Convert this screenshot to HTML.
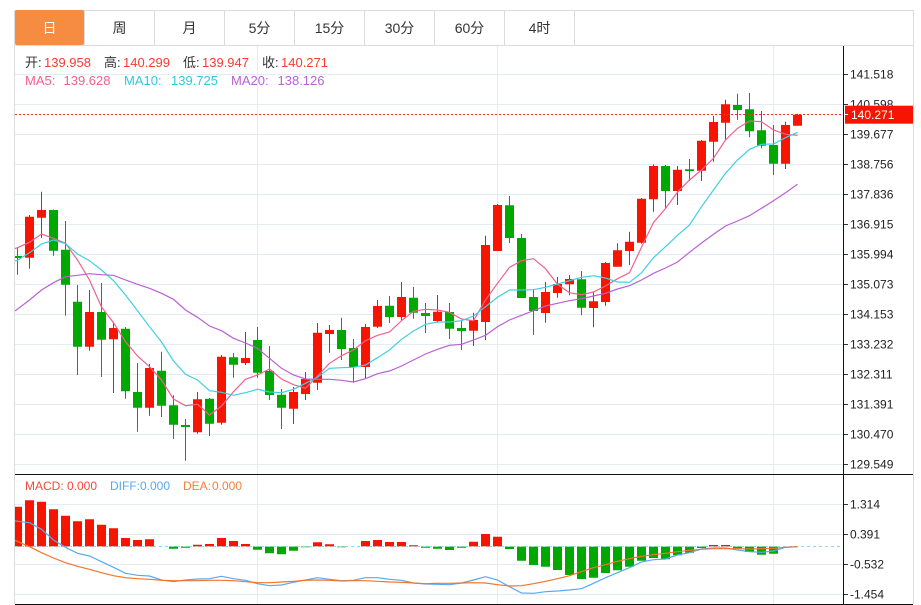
<!DOCTYPE html>
<html>
<head>
<meta charset="utf-8">
<style>
html,body{margin:0;padding:0;background:#fff;width:921px;height:605px;overflow:hidden}
svg{display:block;position:absolute;left:0;top:0}
text{font-family:"Liberation Sans","Noto Sans CJK SC",sans-serif}
</style>
</head>
<body>
<svg width="921" height="605" viewBox="0 0 921 605" xmlns="http://www.w3.org/2000/svg">
<defs><clipPath id="c"><rect x="15" y="45" width="828" height="560"/></clipPath></defs>
<rect width="921" height="605" fill="#fff"/>
<!-- grid -->
<path d="M15 74.5H843M15 104.5H843M15 134.5H843M15 164.5H843M15 194.5H843M15 224.5H843M15 254.5H843M15 284.5H843M15 314.5H843M15 344.5H843M15 374.5H843M15 404.5H843M15 434.5H843M15 464.5H843M15 504.5H843M15 534.5H843M15 564.5H843M15 594.5H843M257.5 46V604M497.5 46V604M773.5 46V604" stroke="#e3ecf3" stroke-width="1" fill="none"/>
<!-- borders -->
<path d="M14.5 10V604M913.5 10V604M14 10.5H914M14 45.5H914M84.5 10V45M154.5 10V45M224.5 10V45M294.5 10V45M364.5 10V45M434.5 10V45M504.5 10V45M574.5 10V45" stroke="#dcdcdc" stroke-width="1" fill="none"/>
<rect x="15" y="10" width="69" height="35" rx="2" fill="#f58c42"/>
<g font-size="14" text-anchor="middle" fill="#333">
<text x="49.5" y="33" fill="#fff">日</text>
<text x="119.5" y="33">周</text>
<text x="189.5" y="33">月</text>
<text x="259.5" y="33">5分</text>
<text x="329.5" y="33">15分</text>
<text x="399.5" y="33">30分</text>
<text x="469.5" y="33">60分</text>
<text x="539.5" y="33">4时</text>
</g>
<g clip-path="url(#c)">
<!-- red wicks -->
<path stroke="#f01408" stroke-width="1" fill="none" d="M29.5 215V268.7M41.5 191.7V238M89.5 290V350.7M113.5 321.7V393M149.5 364V415.7M197.5 392V433.7M221.5 355V424.7M245.5 332V365M293.5 387V424M305.5 372V400M317.5 323V390M329.5 325V352.7M365.5 324V378M377.5 300V328M401.5 282V320M437.5 295V322.7M473.5 312.7V346M485.5 235.7V340M497.5 204V251M545.5 282V322.7M557.5 277V297.7M569.5 275V295.3M593.5 292V327.3M605.5 262V305.7M617.5 243.3V266.7M629.5 231.7V265M641.5 198V243.7M653.5 164.3V211.7M677.5 166V205M701.5 140V181M713.5 116V161.7M725.5 99.7V140M785.5 121.7V169M797.5 113.7V125.7"/>
<!-- green wicks -->
<path stroke="#06a006" stroke-width="1" fill="none" d="M17.5 248V274.7M53.5 209.5V255.7M65.5 221V315.7M77.5 285V375M101.5 283V377M125.5 327V398.7M137.5 363V431.7M161.5 351.7V417M173.5 395.3V439M185.5 419V460.7M209.5 398V436M233.5 353V377.7M257.5 327V377.7M269.5 346V400M281.5 389V429M341.5 317.7V360M353.5 339V382.7M389.5 296V323M413.5 287V318.7M425.5 303V333M449.5 303V339M461.5 320V350M509.5 196V243M521.5 234V298M533.5 290V335M581.5 271V315.3M665.5 165V208M689.5 159V181M737.5 93.7V119.7M749.5 93V137.3M761.5 111V148.3M773.5 125V175"/>
<!-- red bodies -->
<path fill="#f51500" d="M25 216.7h9V257.7h-9zM37 210h9V217.7h-9zM85 312h9V346.7h-9zM109 328h9V339.3h-9zM145 368h9V407.7h-9zM193 399.3h9V432.3h-9zM217 356.7h9V422.7h-9zM241 358h9V363h-9zM289 392h9V408.7h-9zM301 379h9V394h-9zM313 332.7h9V382.7h-9zM325 330h9V334h-9zM361 327h9V367h-9zM373 306h9V326.7h-9zM397 297h9V317h-9zM433 311.7h9V321h-9zM469 320h9V330.7h-9zM481 245h9V322h-9zM493 205h9V251h-9zM541 292h9V313h-9zM553 284h9V293h-9zM565 279h9V284.3h-9zM589 301.3h9V308h-9zM601 263h9V302h-9zM613 250.3h9V266.7h-9zM625 241.7h9V251h-9zM637 198.7h9V242.7h-9zM649 166h9V199.3h-9zM673 169.7h9V191h-9zM697 140.7h9V170.7h-9zM709 122h9V141.7h-9zM721 104.3h9V122.7h-9zM781 125h9V163.7h-9zM793 114.7h9V125.7h-9z"/>
<!-- green bodies -->
<path fill="#00a800" d="M13 256h9v2h-9zM49 210h9V250.7h-9zM61 249.7h9V284.7h-9zM73 301.7h9V346.7h-9zM97 312h9V339.7h-9zM121 328.7h9V391.3h-9zM133 392h9V407.7h-9zM157 370.7h9V405.7h-9zM169 405.3h9V424.7h-9zM181 425h9v2h-9zM205 398.7h9V423.7h-9zM229 357.3h9V364.7h-9zM253 340h9V372.7h-9zM265 371h9V395h-9zM277 394.7h9V407.7h-9zM337 330h9V349h-9zM349 348h9V367h-9zM385 305.7h9V317h-9zM409 297.7h9V312.7h-9zM421 313h9v3h-9zM445 312h9V328.7h-9zM457 328h9v3h-9zM505 205.3h9V238h-9zM517 238h9V298h-9zM529 297h9V311h-9zM577 279.3h9V307.7h-9zM661 166h9V191h-9zM685 169.3h9V171h-9zM733 105h9V110h-9zM745 109.3h9V131.3h-9zM757 130.3h9V145.7h-9zM769 145h9V163.7h-9z"/>
<!-- MA lines -->
<polyline fill="none" stroke="#f2608e" stroke-width="1.2" points="15,248.5 17.5,247.7 29.5,242.3 41.5,234 53.5,238.3 65.5,243.3 77.5,260 89.5,280 101.5,307 113.5,322.7 125.5,341.7 137.5,356 149.5,366.7 161.5,380 173.5,399 185.5,405.7 197.5,404.3 209.5,415 221.5,406 233.5,391.7 245.5,379.3 257.5,375 269.5,369 281.5,379 293.5,384.7 305.5,388.3 317.5,376 329.5,363.3 341.5,355.7 353.5,350 365.5,340.7 377.5,335.3 389.5,332 401.5,320.7 413.5,311.3 425.5,309.3 437.5,310 449.5,312.3 461.5,319 473.5,320.7 485.5,300 497.5,283.3 509.5,267.3 521.5,260.7 533.5,258.7 545.5,268.7 557.5,284.3 569.5,292.7 581.5,294.7 593.5,292 605.5,286 617.5,278.7 629.5,272.7 641.5,247.3 653.5,222.5 665.5,208.5 677.5,192.2 689.5,180 701.5,170 713.5,158.3 725.5,140 737.5,128.3 749.5,121 761.5,121.7 773.5,130 785.5,134.3 797.5,135.3"/>
<polyline fill="none" stroke="#3fcfe2" stroke-width="1.2" points="15,261 17.5,260.3 29.5,252.7 41.5,244 53.5,240 65.5,243.7 77.5,254 89.5,260.7 101.5,270 113.5,280.7 125.5,295 137.5,310.7 149.5,326.7 161.5,342 173.5,361 185.5,374.3 197.5,380 209.5,390.7 221.5,392.3 233.5,395.3 245.5,392.7 257.5,389.3 269.5,392 281.5,392.7 293.5,389.3 305.5,383.3 317.5,377.3 329.5,368.3 341.5,367.7 353.5,367.3 365.5,365 377.5,357.7 389.5,350 401.5,339.3 413.5,331 425.5,324.3 437.5,322 449.5,322 461.5,320.7 473.5,316 485.5,306.7 497.5,297.3 509.5,290 521.5,290 533.5,289.7 545.5,287.3 557.5,284 569.5,280.7 581.5,277.3 593.5,275.7 605.5,278 617.5,282 629.5,282.3 641.5,272.7 653.5,257.7 665.5,246.7 677.5,235.3 689.5,225 701.5,206.7 713.5,190 725.5,173.3 737.5,160 749.5,149.3 761.5,144.3 773.5,144 785.5,137.7 797.5,132.3"/>
<polyline fill="none" stroke="#b862d2" stroke-width="1.2" points="15,311 29.5,300 41.5,290 53.5,282.7 65.5,276.7 77.5,275.3 89.5,273.7 101.5,274.7 113.5,275.3 125.5,280 137.5,284.3 149.5,288.3 161.5,293.3 173.5,299.3 185.5,310 197.5,317.3 209.5,326 221.5,330.7 233.5,338.3 245.5,343 257.5,348.3 269.5,358.3 281.5,368.3 293.5,375 305.5,379 317.5,379.3 329.5,379.3 341.5,380.3 353.5,382 365.5,378.7 377.5,373.7 389.5,371 401.5,366 413.5,360 425.5,354 437.5,349.3 449.5,345.3 461.5,344.3 473.5,340 485.5,335.3 497.5,326.7 509.5,320 521.5,315.3 533.5,310.7 545.5,306 557.5,303.3 569.5,300.7 581.5,298.7 593.5,296 605.5,293.3 617.5,289 629.5,285.7 641.5,280 653.5,273.3 665.5,268 677.5,262 689.5,252.3 701.5,243 713.5,234.3 725.5,226 737.5,221 749.5,215.7 761.5,208.3 773.5,200.7 785.5,192.7 797.5,184.3"/>
<!-- current price line -->
<path d="M15 114.5H843" stroke="#f03020" stroke-width="1" stroke-dasharray="2 2" fill="none"/>
<!-- MACD bars red -->
<path fill="#f51500" d="M13 506.7h9V546.5h-9zM25 500.3h9V546.5h-9zM37 501.7h9V546.5h-9zM49 509.3h9V546.5h-9zM61 515.7h9V546.5h-9zM73 521.3h9V546.5h-9zM85 519.3h9V546.5h-9zM97 524.7h9V546.5h-9zM109 528.3h9V546.5h-9zM121 538h9V546.5h-9zM133 540h9V546.5h-9zM145 539.3h9V546.5h-9zM193 544.7h9V546.5h-9zM205 544h9V546.5h-9zM217 538h9V546.5h-9zM229 541h9V546.5h-9zM241 544h9V546.5h-9zM313 542.3h9V546.5h-9zM325 544.3h9V546.5h-9zM361 541h9V546.5h-9zM373 540h9V546.5h-9zM385 542h9V546.5h-9zM397 542h9V546.5h-9zM409 545.3h9V546.5h-9zM469 541.7h9V546.5h-9zM481 534h9V546.5h-9zM493 536.7h9V546.5h-9zM709 545h9V546.5h-9zM721 545h9V546.5h-9z"/>
<!-- MACD bars green -->
<path fill="#00a800" d="M169 546.5h9V548.7h-9zM181 546.5h9V547.7h-9zM253 546.5h9V549.7h-9zM265 546.5h9V553.3h-9zM277 546.5h9V554.3h-9zM289 546.5h9V550.7h-9zM301 546.5h9V547.3h-9zM337 546.5h9V547.3h-9zM421 546.5h9V547.7h-9zM433 546.5h9V548.7h-9zM445 546.5h9V550h-9zM457 546.5h9V547.7h-9zM505 546.5h9V549h-9zM517 546.5h9V560.7h-9zM529 546.5h9V565h-9zM541 546.5h9V566.7h-9zM553 546.5h9V570h-9zM565 546.5h9V575h-9zM577 546.5h9V579h-9zM589 546.5h9V577.7h-9zM601 546.5h9V573h-9zM613 546.5h9V570.3h-9zM625 546.5h9V566.7h-9zM637 546.5h9V560.7h-9zM649 546.5h9V558h-9zM661 546.5h9V559.3h-9zM673 546.5h9V555.3h-9zM685 546.5h9V552.7h-9zM697 546.5h9V548h-9zM733 546.5h9V548.3h-9zM745 546.5h9V552h-9zM757 546.5h9V554.7h-9zM769 546.5h9V553.7h-9z"/>
<path d="M15 546.5H843" stroke="#8fd8f2" stroke-width="1" stroke-dasharray="3 3" fill="none"/>
<polyline fill="none" stroke="#5aa9f0" stroke-width="1.2" points="15,521 29.5,522.7 41.5,529.3 53.5,540 65.5,547.3 77.5,553.3 89.5,556 101.5,561.7 113.5,567.3 125.5,573.3 137.5,575.3 149.5,576 161.5,580 173.5,581.7 185.5,580 197.5,579 209.5,578.7 221.5,576.3 233.5,578.7 245.5,580.3 257.5,583.7 269.5,585.7 281.5,585 293.5,582.3 305.5,580 317.5,577.7 329.5,579.3 341.5,580.7 353.5,580.3 365.5,577.7 377.5,577.7 389.5,579.3 401.5,580.3 413.5,583 425.5,584 437.5,584.3 449.5,584.7 461.5,583 473.5,580 485.5,576.7 497.5,580 509.5,586.7 521.5,593 533.5,593.3 545.5,591.7 557.5,591 569.5,590 581.5,588.7 593.5,583.3 605.5,577.7 617.5,572.7 629.5,567.7 641.5,562 653.5,559.7 665.5,559 677.5,555 689.5,552.7 701.5,549 713.5,548 725.5,548 737.5,550 749.5,551.7 761.5,552.3 773.5,551 785.5,547.3 797.5,546.7"/>
<polyline fill="none" stroke="#f5742a" stroke-width="1.2" points="15,540.3 29.5,546.7 41.5,552.7 53.5,558 65.5,562.7 77.5,566.3 89.5,569.3 101.5,572.7 113.5,575.7 125.5,577.7 137.5,578.7 149.5,579.3 161.5,580.3 173.5,580.7 185.5,580.7 197.5,580.7 209.5,580.3 221.5,580.3 233.5,580.7 245.5,581.7 257.5,582.7 269.5,582.7 281.5,582 293.5,581.3 305.5,580.3 317.5,580 329.5,580.3 341.5,581 353.5,580.7 365.5,580.7 377.5,581.3 389.5,582 401.5,582.3 413.5,583 425.5,583.7 437.5,583.3 449.5,583.3 461.5,583 473.5,582.7 485.5,583 497.5,584.7 509.5,586 521.5,585.7 533.5,583.7 545.5,581.3 557.5,578.7 569.5,575.7 581.5,571.7 593.5,567.7 605.5,564.7 617.5,561.3 629.5,558.7 641.5,556.3 653.5,554.7 665.5,553.3 677.5,551.7 689.5,550.3 701.5,549.3 713.5,548.7 725.5,548.7 737.5,548.7 749.5,549 761.5,548.7 773.5,548.3 785.5,547.3 797.5,546.7"/>
</g>
<!-- panel lines -->
<path d="M15 474.5H913M15 604.5H913M843.5 46V605" stroke="#111" stroke-width="1" fill="none"/>
<path d="M844 74.5h4M844 104.5h4M844 134.5h4M844 164.5h4M844 194.5h4M844 224.5h4M844 254.5h4M844 284.5h4M844 314.5h4M844 344.5h4M844 374.5h4M844 404.5h4M844 434.5h4M844 464.5h4M844 504.5h4M844 534.5h4M844 564.5h4M844 594.5h4" stroke="#333" stroke-width="1" fill="none"/>
<!-- axis labels -->
<g font-size="12" fill="#222">
<text x="850" y="78.5">141.518</text>
<text x="850" y="108.5">140.598</text>
<text x="850" y="138.5">139.677</text>
<text x="850" y="168.5">138.756</text>
<text x="850" y="198.5">137.836</text>
<text x="850" y="228.5">136.915</text>
<text x="850" y="258.5">135.994</text>
<text x="850" y="288.5">135.073</text>
<text x="850" y="318.5">134.153</text>
<text x="850" y="348.5">133.232</text>
<text x="850" y="378.5">132.311</text>
<text x="850" y="408.5">131.391</text>
<text x="850" y="438.5">130.470</text>
<text x="850" y="468.5">129.549</text>
<text x="850" y="508.5">1.314</text>
<text x="850" y="538.5">0.391</text>
<text x="850" y="568.5">-0.532</text>
<text x="850" y="598.5">-1.454</text>
</g>
<!-- price tag -->
<rect x="845" y="105.7" width="68" height="18" fill="#f51500"/>
<path d="M844 114.5h4" stroke="#fff" stroke-width="1"/>
<text x="851" y="119" font-size="12" fill="#fff">140.271</text>
<!-- header -->
<g font-size="13">
<text x="25" y="67" fill="#333">开:</text><text x="44" y="67" fill="#f53c30">139.958</text>
<text x="104" y="67" fill="#333">高:</text><text x="123" y="67" fill="#f53c30">140.299</text>
<text x="183" y="67" fill="#333">低:</text><text x="202" y="67" fill="#f53c30">139.947</text>
<text x="262" y="67" fill="#333">收:</text><text x="281" y="67" fill="#f53c30">140.271</text>
<text x="25" y="85" fill="#f2608e">MA5:</text><text x="63.5" y="85" fill="#f2608e">139.628</text>
<text x="124" y="85" fill="#2fc9dd">MA10:</text><text x="171" y="85" fill="#2fc9dd">139.725</text>
<text x="231" y="85" fill="#b862d2">MA20:</text><text x="277.5" y="85" fill="#b862d2">138.126</text>
</g>
<g font-size="12">
<text x="25" y="490" fill="#f5483c">MACD:</text><text x="67" y="490" fill="#f5483c">0.000</text>
<text x="110" y="490" fill="#5aa9f0">DIFF:</text><text x="140" y="490" fill="#5aa9f0">0.000</text>
<text x="183" y="490" fill="#f5803a">DEA:</text><text x="212" y="490" fill="#f5803a">0.000</text>
</g>
</svg>
</body>
</html>
